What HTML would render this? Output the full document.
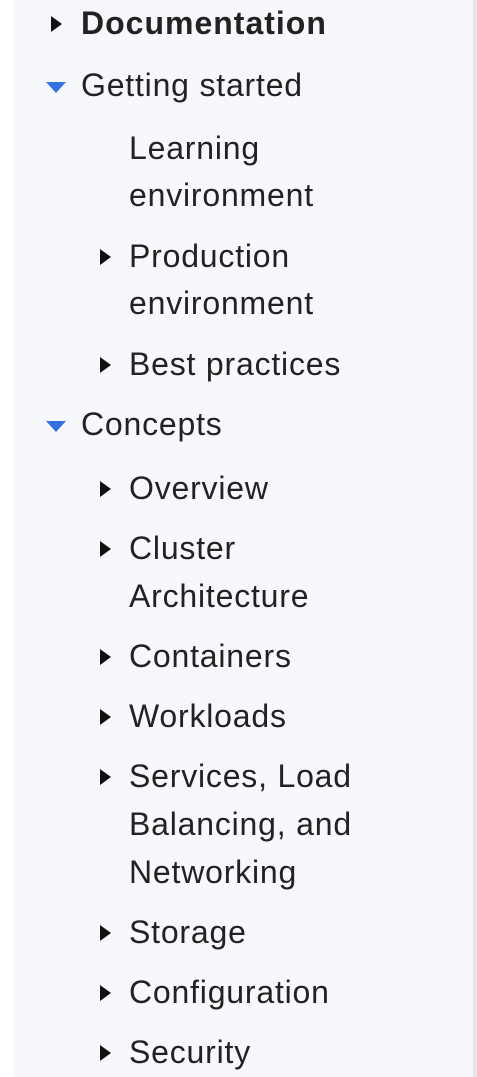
<!DOCTYPE html>
<html><head><style>
html,body{margin:0;padding:0;width:477px;height:1077px;overflow:hidden;background:#fff;}
.panel{position:absolute;left:14px;top:0;width:459px;height:1077px;background:#f7f8fc;border-right:4px solid #e6e7ea;}
.t{position:absolute;font-family:"Liberation Sans",sans-serif;font-size:32px;letter-spacing:0.8px;line-height:48px;color:#222;white-space:nowrap;margin-top:-1px;}
.r{position:absolute;width:0;height:0;border-top:8px solid transparent;border-bottom:8px solid transparent;border-left:11px solid #111;}
.d{position:absolute;width:0;height:0;border-left:10px solid transparent;border-right:10px solid transparent;border-top:11px solid #3371e3;}
</style></head><body>
<div class="panel"></div>
<div class="r" style="left:51px;top:16px"></div><div class="t" style="left:81px;top:0px;font-weight:bold;letter-spacing:1px">Documentation</div>
<div class="d" style="left:46px;top:82px"></div><div class="t" style="left:81px;top:62px">Getting started</div>
<div class="t" style="left:129px;top:125px">Learning</div>
<div class="t" style="left:129px;top:172px">environment</div>
<div class="r" style="left:100px;top:249px"></div><div class="t" style="left:129px;top:233px">Production</div>
<div class="t" style="left:129px;top:280px">environment</div>
<div class="r" style="left:100px;top:357px"></div><div class="t" style="left:129px;top:341px">Best practices</div>
<div class="d" style="left:46px;top:421px"></div><div class="t" style="left:81px;top:401px">Concepts</div>
<div class="r" style="left:100px;top:481px"></div><div class="t" style="left:129px;top:465px">Overview</div>
<div class="r" style="left:100px;top:541px"></div><div class="t" style="left:129px;top:525px">Cluster</div>
<div class="t" style="left:129px;top:573px">Architecture</div>
<div class="r" style="left:100px;top:649px"></div><div class="t" style="left:129px;top:633px">Containers</div>
<div class="r" style="left:100px;top:709px"></div><div class="t" style="left:129px;top:693px">Workloads</div>
<div class="r" style="left:100px;top:769px"></div><div class="t" style="left:129px;top:753px">Services, Load</div>
<div class="t" style="left:129px;top:801px">Balancing, and</div>
<div class="t" style="left:129px;top:849px">Networking</div>
<div class="r" style="left:100px;top:925px"></div><div class="t" style="left:129px;top:909px">Storage</div>
<div class="r" style="left:100px;top:985px"></div><div class="t" style="left:129px;top:969px">Configuration</div>
<div class="r" style="left:100px;top:1045px"></div><div class="t" style="left:129px;top:1029px">Security</div>
</body></html>
